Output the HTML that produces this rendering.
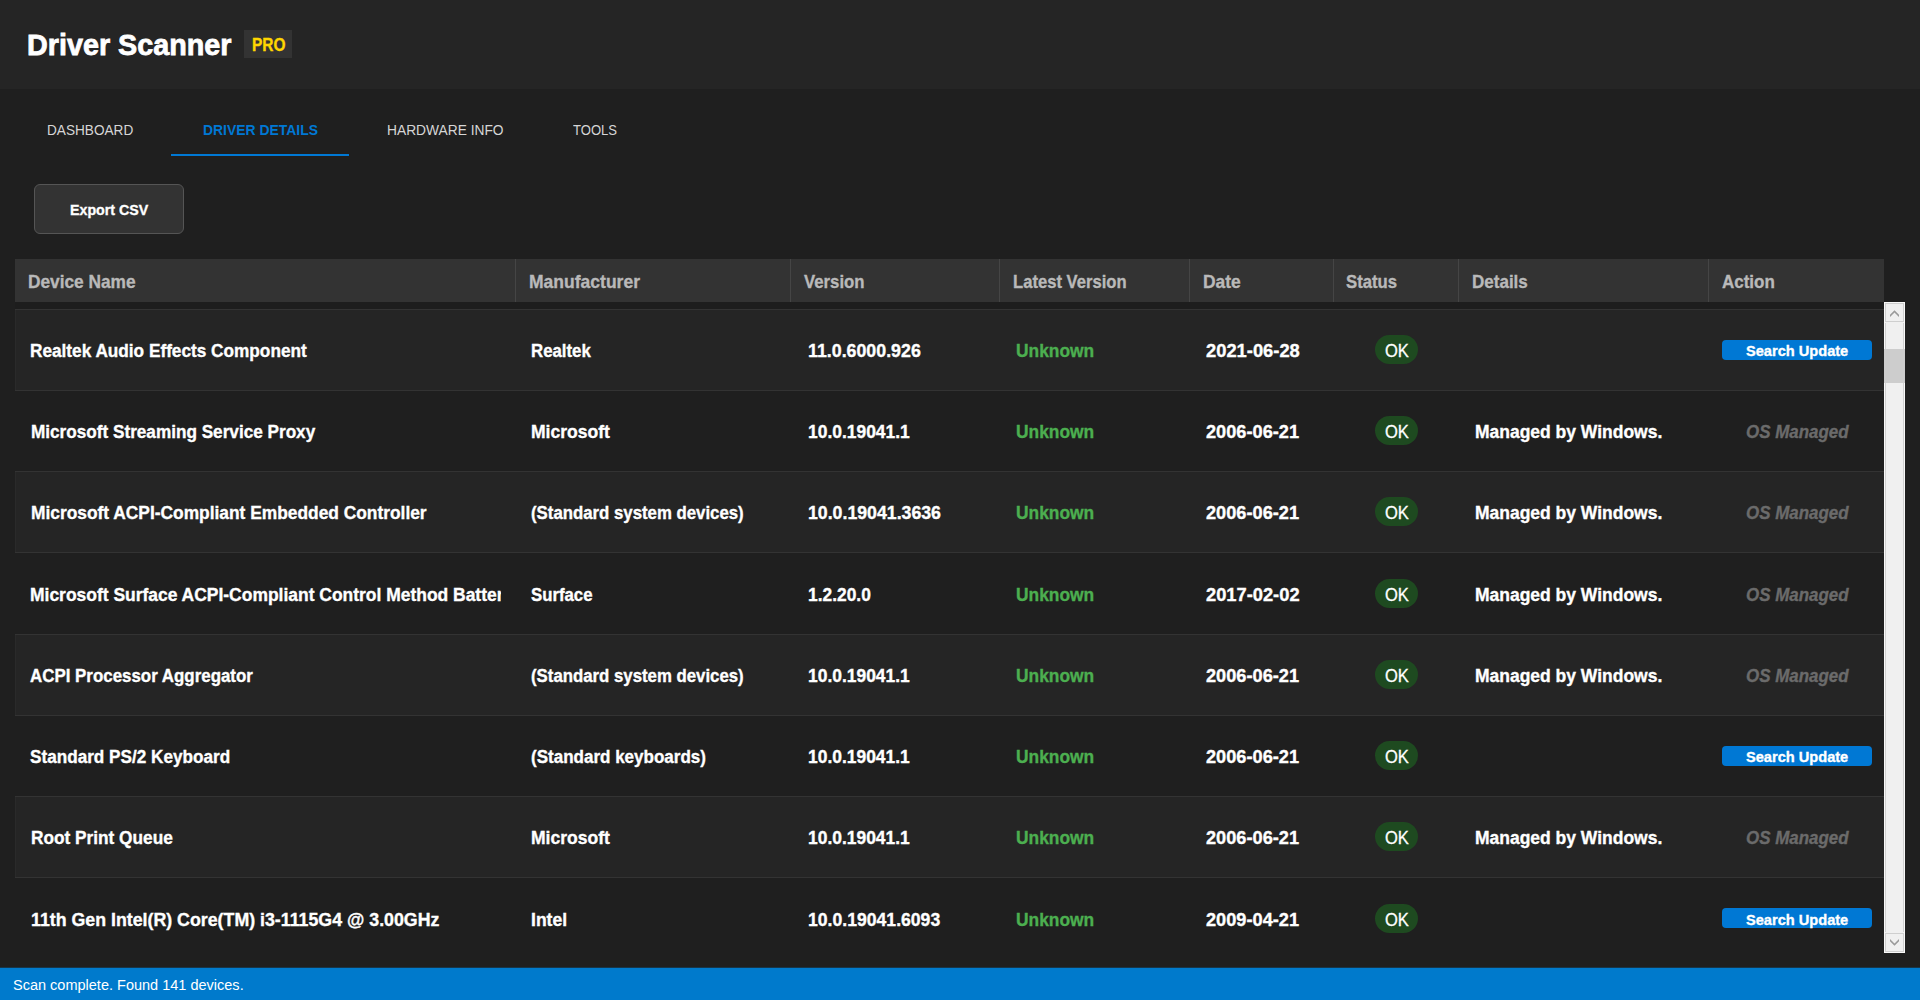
<!DOCTYPE html>
<html><head><meta charset="utf-8"><title>Driver Scanner</title>
<style>
html,body{margin:0;padding:0;}
body{width:1920px;height:1000px;overflow:hidden;background:#1f1f1f;position:relative;font-family:"Liberation Sans",sans-serif;}
body div{position:absolute;box-sizing:content-box;}
.t{white-space:nowrap;line-height:0;height:0;transform-origin:0 0;}
.t::before{content:"";}
</style></head><body>
<div style="left:0px;top:0px;width:1920px;height:89px;background:#252525;"></div>
<div class="t" style="left:26.80px;top:45.40px;font-size:30.290px;font-weight:700;font-style:normal;color:#fff;transform:scaleX(0.9490);-webkit-text-stroke:0.8px #fff;">Driver Scanner</div>
<div style="left:244px;top:30px;width:48px;height:28px;background:#333333;"></div>
<div class="t" style="left:252.09px;top:44.77px;font-size:17.681px;font-weight:700;font-style:normal;color:#ffd700;transform:scaleX(0.8736);-webkit-text-stroke:0.35px #ffd700;">PRO</div>
<div class="t" style="left:46.70px;top:129.88px;font-size:15.072px;font-weight:400;font-style:normal;color:#d6d6d6;transform:scaleX(0.9037);">DASHBOARD</div>
<div class="t" style="left:202.50px;top:129.88px;font-size:15.072px;font-weight:700;font-style:normal;color:#0078d4;transform:scaleX(0.9237);">DRIVER DETAILS</div>
<div class="t" style="left:387.00px;top:129.88px;font-size:15.072px;font-weight:400;font-style:normal;color:#d6d6d6;transform:scaleX(0.9145);">HARDWARE INFO</div>
<div class="t" style="left:572.90px;top:129.88px;font-size:15.072px;font-weight:400;font-style:normal;color:#d6d6d6;transform:scaleX(0.8668);">TOOLS</div>
<div style="left:171px;top:154px;width:178px;height:2px;background:#0078d4;"></div>
<div style="left:34px;top:184px;width:148px;height:48px;background:#333333;border:1px solid #555555;border-radius:6px;"></div>
<div class="t" style="left:69.99px;top:209.63px;font-size:15.507px;font-weight:700;font-style:normal;color:#fff;transform:scaleX(0.9176);-webkit-text-stroke:0.35px #fff;">Export CSV</div>
<div style="left:15px;top:259px;width:1869px;height:43px;background:#333333;"></div>
<div style="left:515px;top:259px;width:1px;height:43px;background:#454545;"></div>
<div style="left:790px;top:259px;width:1px;height:43px;background:#454545;"></div>
<div style="left:999px;top:259px;width:1px;height:43px;background:#454545;"></div>
<div style="left:1189px;top:259px;width:1px;height:43px;background:#454545;"></div>
<div style="left:1333px;top:259px;width:1px;height:43px;background:#454545;"></div>
<div style="left:1458px;top:259px;width:1px;height:43px;background:#454545;"></div>
<div style="left:1708px;top:259px;width:1px;height:43px;background:#454545;"></div>
<div class="t" style="left:28.09px;top:282.07px;font-size:18.841px;font-weight:700;font-style:normal;color:#b9b9b9;transform:scaleX(0.9175);-webkit-text-stroke:0.35px #b9b9b9;">Device Name</div>
<div class="t" style="left:528.84px;top:282.07px;font-size:18.841px;font-weight:700;font-style:normal;color:#b9b9b9;transform:scaleX(0.9305);-webkit-text-stroke:0.35px #b9b9b9;">Manufacturer</div>
<div class="t" style="left:803.84px;top:282.07px;font-size:18.841px;font-weight:700;font-style:normal;color:#b9b9b9;transform:scaleX(0.8892);-webkit-text-stroke:0.35px #b9b9b9;">Version</div>
<div class="t" style="left:1013.34px;top:282.07px;font-size:18.841px;font-weight:700;font-style:normal;color:#b9b9b9;transform:scaleX(0.8821);-webkit-text-stroke:0.35px #b9b9b9;">Latest Version</div>
<div class="t" style="left:1203.34px;top:282.07px;font-size:18.841px;font-weight:700;font-style:normal;color:#b9b9b9;transform:scaleX(0.9254);-webkit-text-stroke:0.35px #b9b9b9;">Date</div>
<div class="t" style="left:1346.34px;top:282.07px;font-size:18.841px;font-weight:700;font-style:normal;color:#b9b9b9;transform:scaleX(0.8863);-webkit-text-stroke:0.35px #b9b9b9;">Status</div>
<div class="t" style="left:1472.09px;top:282.07px;font-size:18.841px;font-weight:700;font-style:normal;color:#b9b9b9;transform:scaleX(0.9040);-webkit-text-stroke:0.35px #b9b9b9;">Details</div>
<div class="t" style="left:1722.09px;top:282.07px;font-size:18.841px;font-weight:700;font-style:normal;color:#b9b9b9;transform:scaleX(0.9011);-webkit-text-stroke:0.35px #b9b9b9;">Action</div>
<div style="left:15px;top:310px;width:1869px;height:80px;background:#252525;"></div>
<div style="left:15px;top:472px;width:1869px;height:80px;background:#252525;"></div>
<div style="left:15px;top:635px;width:1869px;height:80px;background:#252525;"></div>
<div style="left:15px;top:797px;width:1869px;height:80px;background:#252525;"></div>
<div style="left:15px;top:309px;width:1869px;height:1px;background:#333333;"></div>
<div style="left:15px;top:390px;width:1869px;height:1px;background:#333333;"></div>
<div style="left:15px;top:471px;width:1869px;height:1px;background:#333333;"></div>
<div style="left:15px;top:552px;width:1869px;height:1px;background:#333333;"></div>
<div style="left:15px;top:634px;width:1869px;height:1px;background:#333333;"></div>
<div style="left:15px;top:715px;width:1869px;height:1px;background:#333333;"></div>
<div style="left:15px;top:796px;width:1869px;height:1px;background:#333333;"></div>
<div style="left:15px;top:877px;width:1869px;height:1px;background:#333333;"></div>
<div style="left:15px;top:302px;width:1869px;height:7px;background:#1d1d1d;"></div>
<div style="left:15px;top:310px;width:1px;height:80px;background:#2a2a2a;"></div>
<div style="left:15px;top:472px;width:1px;height:80px;background:#2a2a2a;"></div>
<div style="left:15px;top:635px;width:1px;height:80px;background:#2a2a2a;"></div>
<div style="left:15px;top:797px;width:1px;height:80px;background:#2a2a2a;"></div>
<div class="t" style="left:30.09px;top:351.07px;font-size:18.261px;font-weight:700;font-style:normal;color:#fff;transform:scaleX(0.9432);-webkit-text-stroke:0.35px #fff;">Realtek Audio Effects Component</div>
<div class="t" style="left:531.34px;top:351.07px;font-size:18.261px;font-weight:700;font-style:normal;color:#fff;transform:scaleX(0.9204);-webkit-text-stroke:0.35px #fff;">Realtek</div>
<div class="t" style="left:807.59px;top:351.07px;font-size:18.261px;font-weight:700;font-style:normal;color:#fff;transform:scaleX(0.9747);-webkit-text-stroke:0.35px #fff;">11.0.6000.926</div>
<div class="t" style="left:1015.59px;top:351.07px;font-size:18.261px;font-weight:700;font-style:normal;color:#4caf50;transform:scaleX(0.9507);-webkit-text-stroke:0.35px #4caf50;">Unknown</div>
<div class="t" style="left:1205.59px;top:351.07px;font-size:18.261px;font-weight:700;font-style:normal;color:#fff;transform:scaleX(1.0048);-webkit-text-stroke:0.35px #fff;">2021-06-28</div>
<div style="left:1375px;top:335.00px;width:43px;height:29px;background:#1e4a20;border-radius:14.5px;"></div>
<div class="t" style="left:1385.08px;top:350.97px;font-size:18.551px;font-weight:400;font-style:normal;color:#fff;transform:scaleX(0.8916);-webkit-text-stroke:0.3px #fff;">OK</div>
<div style="left:1722px;top:340px;width:150px;height:20px;background:#0078d4;border-radius:4px;"></div>
<div class="t" style="left:1745.59px;top:350.83px;font-size:15.507px;font-weight:700;font-style:normal;color:#fff;transform:scaleX(0.9420);-webkit-text-stroke:0.35px #fff;">Search Update</div>
<div class="t" style="left:30.59px;top:432.07px;font-size:18.261px;font-weight:700;font-style:normal;color:#fff;transform:scaleX(0.9403);-webkit-text-stroke:0.35px #fff;">Microsoft Streaming Service Proxy</div>
<div class="t" style="left:531.09px;top:432.07px;font-size:18.261px;font-weight:700;font-style:normal;color:#fff;transform:scaleX(0.9598);-webkit-text-stroke:0.35px #fff;">Microsoft</div>
<div class="t" style="left:807.59px;top:432.07px;font-size:18.261px;font-weight:700;font-style:normal;color:#fff;transform:scaleX(0.9550);-webkit-text-stroke:0.35px #fff;">10.0.19041.1</div>
<div class="t" style="left:1015.59px;top:432.07px;font-size:18.261px;font-weight:700;font-style:normal;color:#4caf50;transform:scaleX(0.9507);-webkit-text-stroke:0.35px #4caf50;">Unknown</div>
<div class="t" style="left:1205.59px;top:432.07px;font-size:18.261px;font-weight:700;font-style:normal;color:#fff;transform:scaleX(0.9968);-webkit-text-stroke:0.35px #fff;">2006-06-21</div>
<div style="left:1375px;top:416.00px;width:43px;height:29px;background:#1e4a20;border-radius:14.5px;"></div>
<div class="t" style="left:1385.08px;top:431.97px;font-size:18.551px;font-weight:400;font-style:normal;color:#fff;transform:scaleX(0.8916);-webkit-text-stroke:0.3px #fff;">OK</div>
<div class="t" style="left:1474.59px;top:432.07px;font-size:18.261px;font-weight:700;font-style:normal;color:#fff;transform:scaleX(0.9576);-webkit-text-stroke:0.35px #fff;">Managed by Windows.</div>
<div class="t" style="left:1745.59px;top:432.07px;font-size:18.261px;font-weight:700;font-style:italic;color:#6b6b6b;transform:scaleX(0.9286);-webkit-text-stroke:0.35px #6b6b6b;">OS Managed</div>
<div class="t" style="left:30.59px;top:513.07px;font-size:18.261px;font-weight:700;font-style:normal;color:#fff;transform:scaleX(0.9509);-webkit-text-stroke:0.35px #fff;">Microsoft ACPI-Compliant Embedded Controller</div>
<div class="t" style="left:531.09px;top:513.07px;font-size:18.261px;font-weight:700;font-style:normal;color:#fff;transform:scaleX(0.9198);-webkit-text-stroke:0.35px #fff;">(Standard system devices)</div>
<div class="t" style="left:807.59px;top:513.07px;font-size:18.261px;font-weight:700;font-style:normal;color:#fff;transform:scaleX(0.9705);-webkit-text-stroke:0.35px #fff;">10.0.19041.3636</div>
<div class="t" style="left:1015.59px;top:513.07px;font-size:18.261px;font-weight:700;font-style:normal;color:#4caf50;transform:scaleX(0.9507);-webkit-text-stroke:0.35px #4caf50;">Unknown</div>
<div class="t" style="left:1205.59px;top:513.07px;font-size:18.261px;font-weight:700;font-style:normal;color:#fff;transform:scaleX(0.9968);-webkit-text-stroke:0.35px #fff;">2006-06-21</div>
<div style="left:1375px;top:497.00px;width:43px;height:29px;background:#1e4a20;border-radius:14.5px;"></div>
<div class="t" style="left:1385.08px;top:512.97px;font-size:18.551px;font-weight:400;font-style:normal;color:#fff;transform:scaleX(0.8916);-webkit-text-stroke:0.3px #fff;">OK</div>
<div class="t" style="left:1474.59px;top:513.07px;font-size:18.261px;font-weight:700;font-style:normal;color:#fff;transform:scaleX(0.9576);-webkit-text-stroke:0.35px #fff;">Managed by Windows.</div>
<div class="t" style="left:1745.59px;top:513.07px;font-size:18.261px;font-weight:700;font-style:italic;color:#6b6b6b;transform:scaleX(0.9286);-webkit-text-stroke:0.35px #6b6b6b;">OS Managed</div>
<div style="left:0;top:0;width:501px;height:1000px;overflow:hidden;"><div class="t" style="left:30.39px;top:595.07px;font-size:18.261px;font-weight:700;font-style:normal;color:#fff;transform:scaleX(0.9563);-webkit-text-stroke:0.35px #fff;">Microsoft Surface ACPI-Compliant Control Method Battery</div></div>
<div class="t" style="left:530.84px;top:595.07px;font-size:18.261px;font-weight:700;font-style:normal;color:#fff;transform:scaleX(0.9190);-webkit-text-stroke:0.35px #fff;">Surface</div>
<div class="t" style="left:807.59px;top:595.07px;font-size:18.261px;font-weight:700;font-style:normal;color:#fff;transform:scaleX(0.9519);-webkit-text-stroke:0.35px #fff;">1.2.20.0</div>
<div class="t" style="left:1015.59px;top:595.07px;font-size:18.261px;font-weight:700;font-style:normal;color:#4caf50;transform:scaleX(0.9507);-webkit-text-stroke:0.35px #4caf50;">Unknown</div>
<div class="t" style="left:1205.59px;top:595.07px;font-size:18.261px;font-weight:700;font-style:normal;color:#fff;transform:scaleX(1.0021);-webkit-text-stroke:0.35px #fff;">2017-02-02</div>
<div style="left:1375px;top:579.00px;width:43px;height:29px;background:#1e4a20;border-radius:14.5px;"></div>
<div class="t" style="left:1385.08px;top:594.97px;font-size:18.551px;font-weight:400;font-style:normal;color:#fff;transform:scaleX(0.8916);-webkit-text-stroke:0.3px #fff;">OK</div>
<div class="t" style="left:1474.59px;top:595.07px;font-size:18.261px;font-weight:700;font-style:normal;color:#fff;transform:scaleX(0.9576);-webkit-text-stroke:0.35px #fff;">Managed by Windows.</div>
<div class="t" style="left:1745.59px;top:595.07px;font-size:18.261px;font-weight:700;font-style:italic;color:#6b6b6b;transform:scaleX(0.9286);-webkit-text-stroke:0.35px #6b6b6b;">OS Managed</div>
<div class="t" style="left:30.09px;top:676.07px;font-size:18.261px;font-weight:700;font-style:normal;color:#fff;transform:scaleX(0.9261);-webkit-text-stroke:0.35px #fff;">ACPI Processor Aggregator</div>
<div class="t" style="left:531.09px;top:676.07px;font-size:18.261px;font-weight:700;font-style:normal;color:#fff;transform:scaleX(0.9198);-webkit-text-stroke:0.35px #fff;">(Standard system devices)</div>
<div class="t" style="left:807.59px;top:676.07px;font-size:18.261px;font-weight:700;font-style:normal;color:#fff;transform:scaleX(0.9550);-webkit-text-stroke:0.35px #fff;">10.0.19041.1</div>
<div class="t" style="left:1015.59px;top:676.07px;font-size:18.261px;font-weight:700;font-style:normal;color:#4caf50;transform:scaleX(0.9507);-webkit-text-stroke:0.35px #4caf50;">Unknown</div>
<div class="t" style="left:1205.59px;top:676.07px;font-size:18.261px;font-weight:700;font-style:normal;color:#fff;transform:scaleX(0.9968);-webkit-text-stroke:0.35px #fff;">2006-06-21</div>
<div style="left:1375px;top:660.00px;width:43px;height:29px;background:#1e4a20;border-radius:14.5px;"></div>
<div class="t" style="left:1385.08px;top:675.97px;font-size:18.551px;font-weight:400;font-style:normal;color:#fff;transform:scaleX(0.8916);-webkit-text-stroke:0.3px #fff;">OK</div>
<div class="t" style="left:1474.59px;top:676.07px;font-size:18.261px;font-weight:700;font-style:normal;color:#fff;transform:scaleX(0.9576);-webkit-text-stroke:0.35px #fff;">Managed by Windows.</div>
<div class="t" style="left:1745.59px;top:676.07px;font-size:18.261px;font-weight:700;font-style:italic;color:#6b6b6b;transform:scaleX(0.9286);-webkit-text-stroke:0.35px #6b6b6b;">OS Managed</div>
<div class="t" style="left:30.09px;top:757.07px;font-size:18.261px;font-weight:700;font-style:normal;color:#fff;transform:scaleX(0.9399);-webkit-text-stroke:0.35px #fff;">Standard PS/2 Keyboard</div>
<div class="t" style="left:531.09px;top:757.07px;font-size:18.261px;font-weight:700;font-style:normal;color:#fff;transform:scaleX(0.9325);-webkit-text-stroke:0.35px #fff;">(Standard keyboards)</div>
<div class="t" style="left:807.59px;top:757.07px;font-size:18.261px;font-weight:700;font-style:normal;color:#fff;transform:scaleX(0.9550);-webkit-text-stroke:0.35px #fff;">10.0.19041.1</div>
<div class="t" style="left:1015.59px;top:757.07px;font-size:18.261px;font-weight:700;font-style:normal;color:#4caf50;transform:scaleX(0.9507);-webkit-text-stroke:0.35px #4caf50;">Unknown</div>
<div class="t" style="left:1205.59px;top:757.07px;font-size:18.261px;font-weight:700;font-style:normal;color:#fff;transform:scaleX(0.9968);-webkit-text-stroke:0.35px #fff;">2006-06-21</div>
<div style="left:1375px;top:741.00px;width:43px;height:29px;background:#1e4a20;border-radius:14.5px;"></div>
<div class="t" style="left:1385.08px;top:756.97px;font-size:18.551px;font-weight:400;font-style:normal;color:#fff;transform:scaleX(0.8916);-webkit-text-stroke:0.3px #fff;">OK</div>
<div style="left:1722px;top:746px;width:150px;height:20px;background:#0078d4;border-radius:4px;"></div>
<div class="t" style="left:1745.59px;top:756.83px;font-size:15.507px;font-weight:700;font-style:normal;color:#fff;transform:scaleX(0.9420);-webkit-text-stroke:0.35px #fff;">Search Update</div>
<div class="t" style="left:30.59px;top:838.07px;font-size:18.261px;font-weight:700;font-style:normal;color:#fff;transform:scaleX(0.9447);-webkit-text-stroke:0.35px #fff;">Root Print Queue</div>
<div class="t" style="left:531.09px;top:838.07px;font-size:18.261px;font-weight:700;font-style:normal;color:#fff;transform:scaleX(0.9598);-webkit-text-stroke:0.35px #fff;">Microsoft</div>
<div class="t" style="left:807.59px;top:838.07px;font-size:18.261px;font-weight:700;font-style:normal;color:#fff;transform:scaleX(0.9550);-webkit-text-stroke:0.35px #fff;">10.0.19041.1</div>
<div class="t" style="left:1015.59px;top:838.07px;font-size:18.261px;font-weight:700;font-style:normal;color:#4caf50;transform:scaleX(0.9507);-webkit-text-stroke:0.35px #4caf50;">Unknown</div>
<div class="t" style="left:1205.59px;top:838.07px;font-size:18.261px;font-weight:700;font-style:normal;color:#fff;transform:scaleX(0.9968);-webkit-text-stroke:0.35px #fff;">2006-06-21</div>
<div style="left:1375px;top:822.00px;width:43px;height:29px;background:#1e4a20;border-radius:14.5px;"></div>
<div class="t" style="left:1385.08px;top:837.97px;font-size:18.551px;font-weight:400;font-style:normal;color:#fff;transform:scaleX(0.8916);-webkit-text-stroke:0.3px #fff;">OK</div>
<div class="t" style="left:1474.59px;top:838.07px;font-size:18.261px;font-weight:700;font-style:normal;color:#fff;transform:scaleX(0.9576);-webkit-text-stroke:0.35px #fff;">Managed by Windows.</div>
<div class="t" style="left:1745.59px;top:838.07px;font-size:18.261px;font-weight:700;font-style:italic;color:#6b6b6b;transform:scaleX(0.9286);-webkit-text-stroke:0.35px #6b6b6b;">OS Managed</div>
<div class="t" style="left:30.59px;top:920.07px;font-size:18.261px;font-weight:700;font-style:normal;color:#fff;transform:scaleX(0.9737);-webkit-text-stroke:0.35px #fff;">11th Gen Intel(R) Core(TM) i3-1115G4 @ 3.00GHz</div>
<div class="t" style="left:531.34px;top:920.07px;font-size:18.261px;font-weight:700;font-style:normal;color:#fff;transform:scaleX(0.9620);-webkit-text-stroke:0.35px #fff;">Intel</div>
<div class="t" style="left:807.59px;top:920.07px;font-size:18.261px;font-weight:700;font-style:normal;color:#fff;transform:scaleX(0.9650);-webkit-text-stroke:0.35px #fff;">10.0.19041.6093</div>
<div class="t" style="left:1015.59px;top:920.07px;font-size:18.261px;font-weight:700;font-style:normal;color:#4caf50;transform:scaleX(0.9507);-webkit-text-stroke:0.35px #4caf50;">Unknown</div>
<div class="t" style="left:1205.59px;top:920.07px;font-size:18.261px;font-weight:700;font-style:normal;color:#fff;transform:scaleX(0.9968);-webkit-text-stroke:0.35px #fff;">2009-04-21</div>
<div style="left:1375px;top:904.00px;width:43px;height:29px;background:#1e4a20;border-radius:14.5px;"></div>
<div class="t" style="left:1385.08px;top:919.97px;font-size:18.551px;font-weight:400;font-style:normal;color:#fff;transform:scaleX(0.8916);-webkit-text-stroke:0.3px #fff;">OK</div>
<div style="left:1722px;top:908px;width:150px;height:20px;background:#0078d4;border-radius:4px;"></div>
<div class="t" style="left:1745.59px;top:919.53px;font-size:15.507px;font-weight:700;font-style:normal;color:#fff;transform:scaleX(0.9420);-webkit-text-stroke:0.35px #fff;">Search Update</div>
<div style="left:1884px;top:302px;width:19px;height:649px;background:#f0f0f0;border:1px solid #f9f9f9;"></div>
<div style="left:1885px;top:323px;width:1px;height:609px;background:#d0d0d0;"></div>
<div style="left:1903px;top:323px;width:1px;height:609px;background:#d0d0d0;"></div>
<div style="left:1885px;top:303px;width:17px;height:17px;border:1px solid #cfcfcf;background:#f0f0f0;"></div>
<div style="left:1885px;top:933px;width:17px;height:17px;border:1px solid #cfcfcf;background:#f0f0f0;"></div>
<div style="left:1884px;top:349px;width:21px;height:34px;background:#cdcdcd;"></div>
<svg style="position:absolute;left:1884px;top:302px" width="21" height="21"><polygon points="6,12.8 10.5,8.3 15,12.8 15,15 10.5,10.5 6,15" fill="#9a9a9a"/></svg>
<svg style="position:absolute;left:1884px;top:932px" width="21" height="21"><polygon points="6,7 10.5,11.5 15,7 15,9.3 10.5,13.8 6,9.3" fill="#9a9a9a"/></svg>
<div style="left:0px;top:967px;width:1920px;height:1px;background:#17364a;"></div>
<div style="left:0px;top:968px;width:1920px;height:32px;background:#007acc;"></div>
<div class="t" style="left:12.50px;top:984.88px;font-size:15.072px;font-weight:400;font-style:normal;color:#fff;transform:scaleX(0.9632);">Scan complete. Found 141 devices.</div>
</body></html>
